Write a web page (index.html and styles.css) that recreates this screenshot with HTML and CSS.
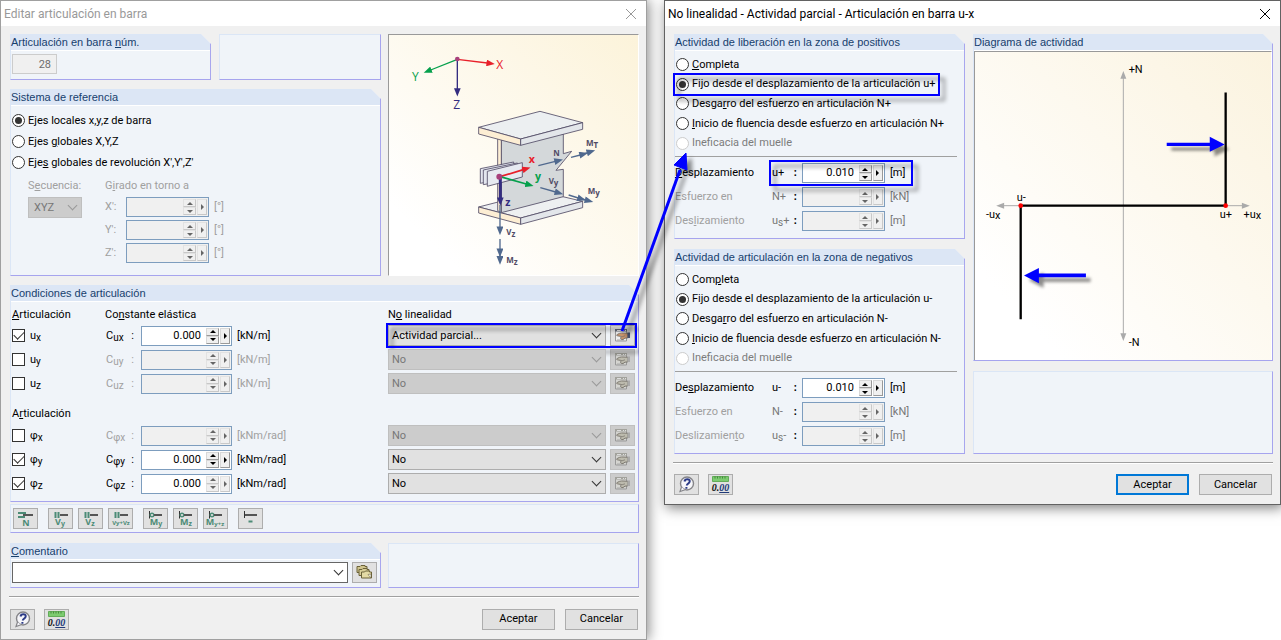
FILE: index.html
```html
<!DOCTYPE html>
<html lang="es">
<head>
<meta charset="utf-8">
<title>Editar articulación en barra</title>
<link rel="stylesheet" href="styles.css">
</head>
<body>
<svg class="defs" aria-hidden="true">
  <symbol id="i-close" viewBox="0 0 12 12"><path d="M1 1L11 11M11 1L1 11" stroke="currentColor" fill="none"/></symbol>
  <symbol id="i-hand" viewBox="0 0 17 15">
    <path d="M1.500 1.500h11v11.500h-11z" fill="var(--sheet,#d4d4d0)" stroke="#999"/>
    <path d="M1 1h12v2.500H1z" fill="var(--bar,#a2a29c)"/>
    <path d="M3 2.500h4M9 2.500h1M11 2.500h1" stroke="#ddd"/>
    <path d="M3 12h7" stroke="#aaa"/>
    <path d="M2.500 7.200C4 5.500 7 4.800 9 5l5 .3v4.500l-3 .4-2 1.300c-1.500.3-2.500-.5-2.500-1.500L7.500 8.500C5.500 8 4 8.500 2.500 7.200z" fill="var(--skin,#bdbbae)" stroke="#77736a" stroke-width=".9"/>
    <path d="M8 8.800l3-1" stroke="#77736a" stroke-width=".7"/>
    <path d="M13.500 4.500H16v5.500h-2.500z" fill="var(--cuff,#aaa)"/>
  </symbol>
  <symbol id="i-help" viewBox="0 0 17 17">
    <circle cx="9" cy="7.500" r="6.500" fill="#f6f6fa" stroke="#858589" stroke-width="1.400"/>
    <path d="M3.500 11L2 15.500l5-1.800" fill="#f6f6fa" stroke="#858589" stroke-width="1.200"/>
    <path d="M6.500 5.500C7 2.500 12 2.500 11.700 5.500c-.2 2-2.700 2-2.900 4M8.400 11v1.800" stroke="#2b3a86" stroke-width="2" fill="none"/>
  </symbol>
  <symbol id="i-ruler" viewBox="0 0 17 6">
    <path d="M.5 .5h16v5H.5z" fill="#7ccb70" stroke="#4fa145" stroke-width=".8"/>
    <path d="M3 .5v2M5.500 .5v2M8 .5v2M10.500 .5v2M13 .5v2" stroke="#377a30" stroke-width=".8"/>
  </symbol>
  <symbol id="i-cards" viewBox="0 0 17 15">
    <path d="M1 1.500h3l1-1h4v1h2v6H1z" fill="#cfc48d" stroke="#6b6239"/>
    <path d="M3 4.500h3l1-1h4v1h2v6H3z" fill="#d8ce99" stroke="#6b6239"/>
    <path d="M5.500 7h3l1-1h4v1h2v6h-10z" fill="#e3daa5" stroke="#6b6239"/>
    <path d="M12 9.500l3 3.500v-4z" fill="#fff" stroke="#6b6239" stroke-width=".6"/>
  </symbol>
  <symbol id="i-shear" viewBox="0 0 23 8">
    <path d="M6.500 1v6M9.500 1v6" stroke="#4c8b76" stroke-width="2"/><path d="M11 4h8" stroke="#555" stroke-width="2"/>
  </symbol>
  <symbol id="i-moment" viewBox="0 0 23 8">
    <path d="M5.500 0v7.500" stroke="#333"/><circle cx="8" cy="4" r="1.800" fill="none" stroke="#4c8b76" stroke-width="1.400"/><path d="M10 4h8" stroke="#555" stroke-width="2"/>
  </symbol>
</svg>

<main class="desktop">
<section class="window" aria-labelledby="t1">
  <header class="titlebar"><h1 id="t1">Editar articulación en barra</h1><button class="close" aria-label="Cerrar"><svg><use href="#i-close"/></svg></button></header>
  <div class="content">
    <div class="split">
      <div class="stack">
        <div class="pair">
          <section class="group">
            <h2><label for="num">Articulación en barra <u>n</u>úm.</label></h2>
            <div class="number"><input id="num" value="28" disabled></div>
          </section>
          <div class="panel"></div>
        </div>
        <section class="group grow">
          <h2>Sistema de referencia</h2>
          <div class="reference">
            <label class="choice"><input type="radio" name="ref" checked><span>E<u>j</u>es locales x,y,z de barra</span></label>
            <label class="choice"><input type="radio" name="ref"><span>Ejes <u>g</u>lobales X,Y,Z</span></label>
            <label class="choice"><input type="radio" name="ref"><span>Eje<u>s</u> globales de revolución X',Y',Z'</span></label>
            <div class="rotation">
              <div class="sequence">
                <label for="seq">S<u>e</u>cuencia:</label>
                <span class="select off"><select id="seq" disabled><option>XYZ</option></select></span>
              </div>
              <div class="angles">
                <span>G<u>i</u>rado en torno a</span>
                <div class="angle"><label for="ax">X':</label><span class="spin off"><input id="ax" disabled><span class="steps"><button disabled aria-label="Más"></button><button disabled aria-label="Menos"></button></span><button class="more" disabled aria-label="Opciones"></button></span><span>[°]</span></div>
                <div class="angle"><label for="ay">Y':</label><span class="spin off"><input id="ay" disabled><span class="steps"><button disabled aria-label="Más"></button><button disabled aria-label="Menos"></button></span><button class="more" disabled aria-label="Opciones"></button></span><span>[°]</span></div>
                <div class="angle"><label for="az">Z':</label><span class="spin off"><input id="az" disabled><span class="steps"><button disabled aria-label="Más"></button><button disabled aria-label="Menos"></button></span><button class="more" disabled aria-label="Opciones"></button></span><span>[°]</span></div>
              </div>
            </div>
          </div>
        </section>
      </div>
      <figure class="picture">
        <svg viewBox="12 15 747 720" role="img" aria-label="Ejes de la articulación">
          <defs>
            <marker id="m-red" viewBox="0 0 10 8" refX="1" refY="4" markerWidth="26" markerHeight="20" markerUnits="userSpaceOnUse" orient="auto"><path d="M0 0L10 4 0 8z" fill="#e8202a"/></marker>
            <marker id="m-green" viewBox="0 0 10 8" refX="1" refY="4" markerWidth="26" markerHeight="20" markerUnits="userSpaceOnUse" orient="auto"><path d="M0 0L10 4 0 8z" fill="#05a04c"/></marker>
            <marker id="m-navy" viewBox="0 0 10 8" refX="1" refY="4" markerWidth="26" markerHeight="20" markerUnits="userSpaceOnUse" orient="auto"><path d="M0 0L10 4 0 8z" fill="#332c80"/></marker>
            <marker id="m-slate" viewBox="0 0 10 8" refX="1" refY="4" markerWidth="28" markerHeight="21" markerUnits="userSpaceOnUse" orient="auto"><path d="M0 0L10 4 0 8z" fill="#50698e"/></marker>
          </defs>
          <g stroke-width="4" fill="none">
            <path d="M217 88L307 99" stroke="#e8202a" marker-end="url(#m-red)"/>
            <path d="M217 88L137 120" stroke="#05a04c" marker-end="url(#m-green)"/>
            <path d="M217 88V177" stroke="#332c80" marker-end="url(#m-navy)"/>
          </g>
          <circle cx="217" cy="87" r="7" fill="#a8407c"/>
          <g class="axis-letter"><text x="334" y="118" fill="#e8202a">X</text><text x="81" y="152" fill="#05a04c">Y</text><text x="205" y="236" fill="#332c80">Z</text></g>
          <g stroke="#514b65" stroke-width="2.500" stroke-linejoin="round">
            <path d="M281 531L465 484 593 514 407 564z" fill="#eef0f1"/>
            <path d="M281 531L407 564V583L281 549z" fill="#fdeed4"/>
            <path d="M407 564L593 514V533L407 583z" fill="#e3e6ea"/>
            <path d="M349 330L535 312V371L560 364 513 421 535 418V500L349 548z" fill="#d4d8da"/>
            <path d="M338 320H349V548L338 542z" fill="#fdeed4"/>
            <path d="M281 292L465 244 593 278 407 327z" fill="#eceff1"/>
            <path d="M281 292L407 327V346L281 312z" fill="#fdeed4"/>
            <path d="M407 327L593 278V298L407 346z" fill="#e3e6ea"/>
            <path d="M286 416L386 396 389 440 286 460z" fill="#e3e6ef"/>
            <path d="M295 420L397 399V445L295 464z" fill="#e3e6ef"/>
            <path d="M307 424L412 398V441L307 469z" fill="#e7eaf1"/>
          </g>
          <g stroke="#50698e" stroke-width="4" fill="none">
            <path d="M460 407L511 394" marker-end="url(#m-slate)"/>
            <path d="M558 382L586 375" marker-end="url(#m-slate)"/><path d="M586 375L608 368" marker-end="url(#m-slate)"/>
            <path d="M466 473L512 486" marker-end="url(#m-slate)"/>
            <path d="M551 495L580 504" marker-end="url(#m-slate)"/><path d="M580 504L602 510" marker-end="url(#m-slate)"/>
            <path d="M345 525V592" marker-end="url(#m-slate)"/>
            <path d="M345 627V658" marker-end="url(#m-slate)"/><path d="M345 658V681" marker-end="url(#m-slate)"/>
          </g>
          <g stroke-width="5" fill="none">
            <path d="M345 440L415 419" stroke="#e8202a" marker-end="url(#m-red)"/>
            <path d="M345 440L424 462" stroke="#05a04c" marker-end="url(#m-green)"/>
            <path d="M346 440V505" stroke="#332c80" stroke-width="9" marker-end="url(#m-navy)"/>
          </g>
          <circle cx="343" cy="440" r="9" fill="#a8407c"/>
          <g class="local-letter"><text x="431" y="399" fill="#e8202a">x</text><text x="450" y="451" fill="#05a04c">y</text><text x="361" y="529" fill="#332c80">z</text></g>
          <g class="force-letter">
            <text x="505" y="377">N</text><text x="491" y="462">V<tspan dy="6">y</tspan></text><text x="364" y="616">V<tspan dy="6">z</tspan></text>
            <text x="603" y="347">M<tspan dy="6">T</tspan></text><text x="608" y="491">M<tspan dy="6">y</tspan></text><text x="364" y="698">M<tspan dy="6">z</tspan></text>
          </g>
        </svg>
      </figure>
    </div>

    <section class="group">
      <h2>Condiciones de articulación</h2>
      <div class="conditions">
        <div class="cond head"><span><u>A</u>rticulación</span><span>Co<u>n</u>stante elástica</span><span>N<u>o</u> linealidad</span></div>
        <div class="cond">
          <label class="choice"><input type="checkbox" checked><span>u<sub>x</sub></span></label>
          <label class="sym" for="cux"><span>C<sub>ux</sub></span><span>:</span></label>
          <span class="spin"><input id="cux" value="0.000"><span class="steps"><button aria-label="Más"></button><button aria-label="Menos"></button></span><button class="more" aria-label="Opciones"></button></span>
          <span class="unit">[kN/m]</span>
          <div class="nonlinear callout"><span class="select"><select aria-label="No linealidad ux"><option>Actividad parcial...</option></select></span><button class="tool live" aria-label="Editar"><svg class="hand"><use href="#i-hand"/></svg></button></div>
        </div>
        <div class="cond">
          <label class="choice"><input type="checkbox"><span>u<sub>y</sub></span></label>
          <label class="sym off" for="cuy"><span>C<sub>uy</sub></span><span>:</span></label>
          <span class="spin off"><input id="cuy" disabled><span class="steps"><button disabled aria-label="Más"></button><button disabled aria-label="Menos"></button></span><button class="more" disabled aria-label="Opciones"></button></span>
          <span class="unit off">[kN/m]</span>
          <div class="nonlinear"><span class="select off"><select disabled aria-label="No linealidad uy"><option>No</option></select></span><button class="tool" disabled aria-label="Editar"><svg class="hand"><use href="#i-hand"/></svg></button></div>
        </div>
        <div class="cond">
          <label class="choice"><input type="checkbox"><span>u<sub>z</sub></span></label>
          <label class="sym off" for="cuz"><span>C<sub>uz</sub></span><span>:</span></label>
          <span class="spin off"><input id="cuz" disabled><span class="steps"><button disabled aria-label="Más"></button><button disabled aria-label="Menos"></button></span><button class="more" disabled aria-label="Opciones"></button></span>
          <span class="unit off">[kN/m]</span>
          <div class="nonlinear"><span class="select off"><select disabled aria-label="No linealidad uz"><option>No</option></select></span><button class="tool" disabled aria-label="Editar"><svg class="hand"><use href="#i-hand"/></svg></button></div>
        </div>
        <div class="cond head second"><span>A<u>r</u>ticulación</span></div>
        <div class="cond">
          <label class="choice"><input type="checkbox"><span>φ<sub>x</sub></span></label>
          <label class="sym off" for="cfx"><span>C<sub>φx</sub></span><span>:</span></label>
          <span class="spin off"><input id="cfx" disabled><span class="steps"><button disabled aria-label="Más"></button><button disabled aria-label="Menos"></button></span><button class="more" disabled aria-label="Opciones"></button></span>
          <span class="unit off">[kNm/rad]</span>
          <div class="nonlinear"><span class="select off"><select disabled aria-label="No linealidad φx"><option>No</option></select></span><button class="tool" disabled aria-label="Editar"><svg class="hand"><use href="#i-hand"/></svg></button></div>
        </div>
        <div class="cond">
          <label class="choice"><input type="checkbox" checked><span>φ<sub>y</sub></span></label>
          <label class="sym" for="cfy"><span>C<sub>φy</sub></span><span>:</span></label>
          <span class="spin"><input id="cfy" value="0.000"><span class="steps"><button aria-label="Más"></button><button aria-label="Menos"></button></span><button class="more" aria-label="Opciones"></button></span>
          <span class="unit">[kNm/rad]</span>
          <div class="nonlinear"><span class="select"><select aria-label="No linealidad φy"><option>No</option></select></span><button class="tool" disabled aria-label="Editar"><svg class="hand"><use href="#i-hand"/></svg></button></div>
        </div>
        <div class="cond">
          <label class="choice"><input type="checkbox" checked><span>φ<sub>z</sub></span></label>
          <label class="sym" for="cfz"><span>C<sub>φz</sub></span><span>:</span></label>
          <span class="spin"><input id="cfz" value="0.000"><span class="steps"><button disabled aria-label="Más"></button><button disabled aria-label="Menos"></button></span><button class="more" disabled aria-label="Opciones"></button></span>
          <span class="unit">[kNm/rad]</span>
          <div class="nonlinear"><span class="select"><select aria-label="No linealidad φz"><option>No</option></select></span><button class="tool" disabled aria-label="Editar"><svg class="hand"><use href="#i-hand"/></svg></button></div>
        </div>
      </div>
    </section>

    <div class="toolbar panel">
      <div><button class="tool" aria-label="Liberar N"><svg class="rel" viewBox="0 0 23 19"><path d="M4 4h8M4 8h7" stroke="#4c8b76" stroke-width="2"/><path d="M9 6h10" stroke="#555" stroke-width="2"/><text x="12" y="17">N</text></svg></button></div>
      <div>
        <button class="tool" aria-label="Liberar Vy"><svg class="rel" viewBox="0 0 23 19"><use href="#i-shear" y="2" width="23" height="8"/><text x="11" y="16">V<tspan class="low" dy="1">y</tspan></text></svg></button>
        <button class="tool" aria-label="Liberar Vz"><svg class="rel" viewBox="0 0 23 19"><use href="#i-shear" y="2" width="23" height="8"/><text x="11" y="16">V<tspan class="low" dy="1">z</tspan></text></svg></button>
        <button class="tool" aria-label="Liberar Vy y Vz"><svg class="rel" viewBox="0 0 23 19"><use href="#i-shear" y="2" width="23" height="8"/><text class="tiny" x="12" y="16">Vy+Vz</text></svg></button>
      </div>
      <div>
        <button class="tool" aria-label="Liberar My"><svg class="rel" viewBox="0 0 23 19"><use href="#i-moment" y="2" width="23" height="8"/><text x="12" y="16">M<tspan class="low" dy="1">y</tspan></text></svg></button>
        <button class="tool" aria-label="Liberar Mz"><svg class="rel" viewBox="0 0 23 19"><use href="#i-moment" y="2" width="23" height="8"/><text x="12" y="16">M<tspan class="low" dy="1">z</tspan></text></svg></button>
        <button class="tool" aria-label="Liberar My y Mz"><svg class="rel" viewBox="0 0 23 19"><use href="#i-moment" y="2" width="23" height="8"/><text x="11" y="16">M<tspan class="tiny" dy="1">y+z</tspan></text></svg></button>
      </div>
      <div><button class="tool" aria-label="Sin liberación"><svg class="rel" viewBox="0 0 23 19"><path d="M5.500 2v7" stroke="#333"/><path d="M6 6h12" stroke="#555" stroke-width="2"/><path d="M9.500 12.500h4" stroke="#4c8b76" stroke-width="2"/></svg></button></div>
    </div>

    <div class="split comment">
      <section class="group">
        <h2><label for="com"><u>C</u>omentario</label></h2>
        <div class="nonlinear entry"><span class="select open"><select id="com"><option></option></select></span><button class="tool" aria-label="Comentarios"><svg class="hand"><use href="#i-cards"/></svg></button></div>
      </section>
      <div class="panel"></div>
    </div>
    <hr>
    <footer>
      <button class="tool" aria-label="Ayuda"><svg class="big"><use href="#i-help"/></svg></button>
      <button class="tool" aria-label="Unidades"><span class="units"><svg><use href="#i-ruler"/></svg><span>0.<u>00</u></span></span></button>
      <button class="action first">Aceptar</button><button class="action">Cancelar</button>
    </footer>
  </div>
</section>

<section class="window front" aria-labelledby="t2">
  <header class="titlebar"><h1 id="t2">No linealidad - Actividad parcial - Articulación en barra u-x</h1><button class="close" aria-label="Cerrar"><svg><use href="#i-close"/></svg></button></header>
  <div class="content">
    <div class="split activity">
      <div class="stack">
        <section class="group">
          <h2>Actividad de liberación en la zona de positivos</h2>
          <div class="zone">
            <div class="choices">
              <label class="choice"><input type="radio" name="pos"><span><u>C</u>ompleta</span></label>
              <label class="choice callout"><input type="radio" name="pos" checked><span>Fijo desde el desplazamiento de la articulación u+</span></label>
              <label class="choice"><input type="radio" name="pos"><span>Desga<u>r</u>ro del esfuerzo en articulación N+</span></label>
              <label class="choice"><input type="radio" name="pos"><span><u>I</u>nicio de fluencia desde esfuerzo en articulación N+</span></label>
              <label class="choice off"><input type="radio" name="pos" disabled><span>Ineficacia del muelle</span></label>
            </div>
            <div class="limits">
              <div class="limit"><label for="p1"><u>D</u>esplazamiento</label><div class="field callout"><span class="sym"><span>u+</span><b>:</b></span><span class="spin"><input id="p1" value="0.010"><span class="steps"><button aria-label="Más"></button><button aria-label="Menos"></button></span><button class="more" aria-label="Opciones"></button></span><span class="unit">[m]</span></div></div>
              <div class="limit off"><label for="p2">Esfuerzo en</label><div class="field"><span class="sym"><span>N+</span><b>:</b></span><span class="spin off"><input id="p2" disabled><span class="steps"><button disabled aria-label="Más"></button><button disabled aria-label="Menos"></button></span><button class="more" disabled aria-label="Opciones"></button></span><span class="unit">[kN]</span></div></div>
              <div class="limit off"><label for="p3">Des<u>l</u>izamiento</label><div class="field"><span class="sym"><span>u<sub>s</sub>+</span><b>:</b></span><span class="spin off"><input id="p3" disabled><span class="steps"><button disabled aria-label="Más"></button><button disabled aria-label="Menos"></button></span><button class="more" disabled aria-label="Opciones"></button></span><span class="unit">[m]</span></div></div>
            </div>
          </div>
        </section>
        <section class="group">
          <h2>Actividad de articulación en la zona de negativos</h2>
          <div class="zone">
            <div class="choices">
              <label class="choice"><input type="radio" name="neg"><span>Com<u>p</u>leta</span></label>
              <label class="choice"><input type="radio" name="neg" checked><span>Fijo desde el desplazamiento de la articulación u-</span></label>
              <label class="choice"><input type="radio" name="neg"><span>Desga<u>r</u>ro del esfuerzo en articulación N-</span></label>
              <label class="choice"><input type="radio" name="neg"><span><u>I</u>nicio de fluencia desde esfuerzo en articulación N-</span></label>
              <label class="choice off"><input type="radio" name="neg" disabled><span>Ineficacia del muelle</span></label>
            </div>
            <div class="limits">
              <div class="limit"><label for="n1">De<u>s</u>plazamiento</label><div class="field"><span class="sym"><span>u-</span><b>:</b></span><span class="spin"><input id="n1" value="0.010"><span class="steps"><button aria-label="Más"></button><button aria-label="Menos"></button></span><button class="more" aria-label="Opciones"></button></span><span class="unit">[m]</span></div></div>
              <div class="limit off"><label for="n2">Esfuerzo en</label><div class="field"><span class="sym"><span>N-</span><b>:</b></span><span class="spin off"><input id="n2" disabled><span class="steps"><button disabled aria-label="Más"></button><button disabled aria-label="Menos"></button></span><button class="more" disabled aria-label="Opciones"></button></span><span class="unit">[kN]</span></div></div>
              <div class="limit off"><label for="n3">Deslizamien<u>t</u>o</label><div class="field"><span class="sym"><span>u<sub>s</sub>-</span><b>:</b></span><span class="spin off"><input id="n3" disabled><span class="steps"><button disabled aria-label="Más"></button><button disabled aria-label="Menos"></button></span><button class="more" disabled aria-label="Opciones"></button></span><span class="unit">[m]</span></div></div>
            </div>
          </div>
        </section>
      </div>
      <div class="stack">
        <section class="group diagram">
          <h2>Diagrama de actividad</h2>
          <figure class="picture">
            <svg viewBox="10 62 894 930" role="img" aria-label="Diagrama de actividad">
              <g stroke="#aaa" stroke-width="3"><path d="M458 140V915M95 526H820"/></g>
              <g fill="#aaa"><path d="M458 119l9 24h-18zM458 935l9-24h-18zM74 526l24-9v18zM840 526l-24-9v18z"/></g>
              <path d="M148 869V526H767V184" fill="none" stroke="#000" stroke-width="7"/>
              <circle cx="148" cy="526" r="7" fill="#f00"/><circle cx="767" cy="526" r="7" fill="#f00"/>
              <g class="plot-letter">
                <text x="474" y="125">+N</text><text x="474" y="950">-N</text><text x="136" y="513">u-</text><text x="749" y="563">u+</text>
                <text x="43" y="563">-u<tspan dy="4">x</tspan></text><text x="821" y="563">+u<tspan dy="4">x</tspan></text>
              </g>
              <g class="pointer"><path d="M589 336H719V318L764 341 719 363V346H589z"/><path d="M345 731H203V714L158 737 203 760V742H345z"/></g>
            </svg>
          </figure>
        </section>
        <div class="panel grow"></div>
      </div>
    </div>
    <hr>
    <footer>
      <button class="tool" aria-label="Ayuda"><svg class="big"><use href="#i-help"/></svg></button>
      <button class="tool" aria-label="Unidades"><span class="units"><svg><use href="#i-ruler"/></svg><span>0.<u>00</u></span></span></button>
      <button class="action first default">Aceptar</button><button class="action">Cancelar</button>
    </footer>
  </div>
</section>
<svg class="link-arrow" viewBox="0 0 100 200" aria-hidden="true"><path d="M12 185L70 24" stroke="#00f" stroke-width="3"/><path d="M76 7L64 19 77 24z" fill="#00f" stroke="#00f"/></svg>
</main>
</body>
</html>
```
FILE: styles.css
```css
* { box-sizing: border-box; }
:root { --ui: Roboto, "Noto Sans", sans-serif; --line: #a6a4ee; --panel: #f0f4f9; }
body { margin: 0; background: #fff; color: #000; font: 11px/16px var(--ui); }
button, input, select { font: inherit; color: inherit; margin: 0; padding: 0; border-radius: 0; }
h1, h2, figure { margin: 0; font-weight: normal; }
sub { font-size: 10px; line-height: 0; vertical-align: -2px; }
u { text-underline-offset: 1px; }
.defs { position: absolute; width: 0; height: 0; }

.desktop { position: relative; display: flex; align-items: flex-start; gap: 17px; }
.window { flex: 647 1 0; min-width: 0; background: #f0f0f0; border: 1px solid #a0a0a0; box-shadow: 2px 0 12px rgba(0,0,0,.45); }
.window.front { flex-grow: 617; border-color: #626262; box-shadow: 2px 3px 12px rgba(0,0,0,.5); }
.titlebar { display: flex; align-items: center; justify-content: space-between; height: 25px; padding: 0 9px 0 3px; background: #fff; color: #999; }
.front .titlebar { color: #000; }
.titlebar h1 { font: 12px/16px var(--ui); white-space: nowrap; }
.close { display: flex; border: 0; background: none; }
.close svg { width: 12px; height: 12px; }
.content { padding: 8px 7px 9px 9px; }

.split { display: grid; grid-template-columns: 371fr 251fr; gap: 7px; margin-bottom: 9px; }
.activity { grid-template-columns: 291fr 300fr; gap: 8px; margin-bottom: 8px; }
.stack { display: flex; flex-direction: column; gap: 9px; min-width: 0; }
.activity .stack { gap: 10px; }
.pair { display: grid; grid-template-columns: 201fr 162fr; gap: 8px; }
.grow { flex: 1; }
.group, .panel { background: var(--panel); border: 1px solid var(--line); border-top-color: #dbe6f6; border-left-color: #dbe6f6; }
.group { clip-path: polygon(-9px 0, calc(100% - 10px) 0, 100% 10px, 100% 100%, -9px 100%); }
.group h2 { height: 16px; background: #dce6f5; border-bottom: 1px solid #fff; color: #17406d; font: 11px/15px "Liberation Sans", Arial, sans-serif; }

.number { padding: 3px 1px 5px; }
.number input { display: block; width: 45px; height: 20px; padding-right: 5px; text-align: right; background: #f0f0f0; border: 1px solid #ccc; color: #6d6d6d; }
.choice { display: flex; align-items: center; white-space: pre; }
.choice input { appearance: none; display: grid; place-items: center; flex: none; width: 13px; height: 13px; margin-right: 3px; background: #fff; border: 1px solid #333; }
.choice input[type=radio] { border-radius: 50%; }
.choice input[type=radio]:checked::after { content: ""; width: 7px; height: 7px; border-radius: 50%; background: #333; }
.choice input[type=checkbox] { margin-right: 5px; }
.choice input[type=checkbox]:checked::after { content: ""; width: 9px; height: 5px; margin-bottom: 3px; border: solid #333; border-width: 0 0 1px 1px; transform: rotate(-45deg); }
.choice input:disabled { border-color: #ccc; }
.off { color: #a0a0a0; }
.choice.off { color: #7c7c7c; }

.reference { padding: 4px 1px 9px; }
.reference .choice { height: 21px; }
.rotation { display: flex; gap: 23px; padding: 5px 0 0 16px; color: #a0a0a0; }
.sequence, .angles { display: flex; flex-direction: column; gap: 3px; }
.sequence .select { width: 54px; }
.angles { white-space: nowrap; }
.angle { display: grid; grid-template-columns: 21px 83px 1fr; align-items: center; height: 20px; }
.angle > :last-child { padding-left: 5px; }

.spin { display: flex; gap: 1px; height: 20px; padding: 1px; background: #fff; border: 1px solid #7d9dbe; color: #000; }
.spin.off { background: #f0f0f0; }
.spin input { flex: 1; min-width: 0; width: 0; padding-right: 4px; border: 0; background: none; text-align: right; }
.steps { display: grid; grid-template-rows: 1fr 1fr; width: 13px; }
.steps button, .more { display: grid; place-items: center; background: #f0f0f0; border: 1px solid #d8d8d8; border-right-color: #999; border-bottom-color: #999; color: #000; }
.steps button:disabled, .more:disabled { border-color: #e2e2e2 #c8c8c8 #c8c8c8 #e2e2e2; color: #666; }
.steps button::before { content: ""; border: 3px solid transparent; border-top: 0; border-bottom-color: currentColor; }
.steps button + button::before { border-top: 3px solid currentColor; border-bottom: 0; }
.more { width: 10px; }
.more::before { content: ""; border: 3px solid transparent; border-left-color: currentColor; border-right: 0; }

.select { position: relative; display: block; height: 21px; }
.select select { appearance: none; display: block; width: 100%; height: 100%; padding: 1px 0 0 3px; background: #e1e1e1; border: 1px solid #adadad; opacity: 1; }
.select.off select { background: #ccc; border-color: #bfbfbf; color: #777; }
.select::after { content: ""; position: absolute; right: 6px; top: 5px; width: 6px; height: 6px; border: solid #333; border-width: 0 1px 1px 0; transform: rotate(45deg); pointer-events: none; }
.select.off::after { border-color: #999; }
.sequence select { padding-left: 5px; }
.select.open select { background: #fff; border-color: #666; }

.conditions { padding: 5px 3px 5px 1px; }
.cond { display: grid; grid-template-columns: 94px 35px 91px minmax(60px, 156fr) minmax(0, 247fr); align-items: center; height: 24px; }
.cond.head { grid-template-columns: 93px minmax(186px, 283fr) minmax(0, 247fr); height: 17px; }
.cond.head.second { margin: 10px 0 1px; }
.sym { display: flex; justify-content: space-between; white-space: nowrap; }
.cond .sym { padding-right: 7px; }
.unit { padding-left: 5px; }
.nonlinear { display: grid; grid-template-columns: 1fr 25px; gap: 4px; }
.tool { display: grid; place-items: center; flex: none; width: 25px; height: 21px; background: #e1e1e1; border: 1px solid #adadad; }
.tool:disabled { background: #ccc; border-color: #bfbfbf; }
.tool svg { display: block; }
.hand { width: 17px; height: 15px; }
.live { --skin: #c9956d; --bar: #666a78; --cuff: #4b5674; --sheet: #eee; }
.big { width: 17px; height: 17px; }
.units { display: grid; justify-items: center; color: #111; font: italic bold 10px/11px "Liberation Serif", serif; }
.units svg { width: 17px; height: 6px; }
.units u { color: #203a78; }
.rel { width: 23px; height: 19px; }
.rel text { font: bold 9px "Noto Sans", sans-serif; fill: #4c8b76; text-anchor: middle; }
.rel .low { font-size: 7px; }
.rel .tiny { font-size: 6px; }

.callout { position: relative; }
.callout::after { content: ""; position: absolute; inset: -2px; border: 2px solid #00f; filter: drop-shadow(5px 5px 2px rgba(0,0,0,.45)); pointer-events: none; }
.choice.callout { justify-self: start; }
.choice.callout::after { inset: -2px -5px -2px -3px; }
.field.callout { justify-self: start; }
.field.callout::after { inset: -3px -8px -3px -3px; }

.toolbar { display: flex; gap: 10px; margin: -7px 0 10px; padding: 3px 2px; }
.split + .group { margin-bottom: 9px; }
.toolbar div { display: flex; gap: 5px; }
.comment { margin-bottom: 8px; }
.entry { padding: 2px 3px 4px 1px; }
hr { height: 2px; margin: 0 0 11px -1px; border: 0; border-top: 1px solid #a0a0a0; background: #fff; }
.front hr { margin-bottom: 10px; }
footer { display: flex; gap: 9px; padding-right: 1px; }
.action { width: 73px; height: 21px; margin-left: 1px; background: #e1e1e1; border: 1px solid #adadad; }
.action.first { margin-left: auto; }
.action.default { border: 2px solid #0078d7; }

.zone { padding: 4px 7px 7px 0; }
.choices { display: grid; grid-auto-rows: 1fr; height: 98px; padding-left: 1px; }
.limits { display: grid; gap: 4px; margin-top: 3px; padding-top: 6px; border-top: 1px solid #a0a0a0; }
.limit { display: grid; grid-template-columns: 97px 1fr; align-items: center; white-space: nowrap; }
.field { display: grid; grid-template-columns: 30px 83px auto; justify-content: start; align-items: center; }
.field .sym { padding-right: 5px; }
.limit.off .unit, .limit.off .sym { color: #777; }
.limit b { color: #000; font-weight: bold; }

.picture { overflow: hidden; border: 1px solid #999; border-right-color: #fff; border-bottom-color: #fff; background: linear-gradient(to top right, #fff 15%, #fcf3da); }
.picture svg { display: block; width: 100%; height: 100%; }
.diagram .picture { aspect-ratio: 298 / 309; border-bottom: 0; background: linear-gradient(to top right, #fff 15%, #fbf3df); }
.axis-letter { font: 36px "Open Sans", sans-serif; }
.local-letter { font: bold 32px "Open Sans", sans-serif; }
.force-letter { font: bold 24px "Open Sans", sans-serif; fill: #514b65; }
.plot-letter { font: 33px var(--ui); }
.pointer { fill: #00f; filter: drop-shadow(14px 14px 5px rgba(0,0,0,.45)); }
.link-arrow { position: absolute; left: 610px; top: 146px; width: 100px; height: 200px; filter: drop-shadow(5px 5px 2px rgba(0,0,0,.45)); pointer-events: none; }
```
